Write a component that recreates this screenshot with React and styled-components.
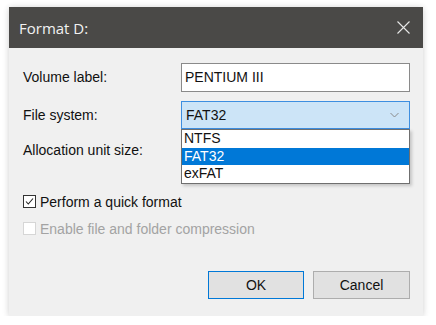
import styled, { createGlobalStyle } from 'styled-components';

const GlobalStyle = createGlobalStyle`
  body {
    margin: 0;
    background: #ffffff;
    font-family: "Liberation Sans", Arial, sans-serif;
  }
`;

const Page = styled.div`
  padding: 7px 0 0 9px;
`;

const Dialog = styled.div`
  width: 414px;
  height: 309px;
  display: flex;
  flex-direction: column;
  background: #f0f0f0;
  box-shadow: 0 0 6px rgba(0, 0, 0, 0.12), 0 2px 8px rgba(0, 0, 0, 0.08);
`;

const TitleBar = styled.div`
  height: 41px;
  display: flex;
  align-items: center;
  justify-content: space-between;
  padding: 0 13px 0 10px;
  background: #4a4947;
  color: #f2f2f2;
  font-family: "Open Sans", "Noto Sans", sans-serif;
  font-size: 15px;
`;

const Body = styled.div`
  flex: 1;
  display: flex;
  flex-direction: column;
  padding: 14px 13px 0 14px;
  font-size: 14px;
  color: #111;
`;

const FieldRow = styled.div`
  display: grid;
  grid-template-columns: 158px 229px;
  align-items: center;
  height: ${(p) => p.h}px;
  margin-bottom: ${(p) => p.mb || 0}px;
  position: relative;
`;

const Label = styled.span`
  line-height: 16px;
`;

const TextBox = styled.div`
  height: 29px;
  box-sizing: border-box;
  border: 1px solid #8a8a8a;
  background: #fff;
  display: flex;
  align-items: center;
  padding-left: 3px;
`;

const Select = styled.div`
  height: 28px;
  box-sizing: border-box;
  border: 1px solid #3d8ee0;
  background: #cce4f7;
  display: flex;
  align-items: center;
  justify-content: space-between;
  padding: 0 10px 0 4px;
`;

const List = styled.div`
  position: absolute;
  left: 158px;
  top: 28px;
  width: 229px;
  box-sizing: border-box;
  border: 1px solid #6f6f6f;
  background: #fff;
  box-shadow: 2px 2px 3px rgba(0, 0, 0, 0.18);
  z-index: 2;
`;

const Option = styled.div`
  height: 17.5px;
  line-height: 17px;
  padding-left: 2px;
  background: ${(p) => (p.selected ? '#0078d7' : 'transparent')};
  color: ${(p) => (p.selected ? '#fff' : '#111')};
`;

const CheckRow = styled.label`
  display: flex;
  align-items: center;
  gap: 4px;
  height: 27px;
  color: ${(p) => (p.disabled ? '#a3a3a3' : '#111')};
`;

const Box = styled.span`
  width: 13px;
  height: 13px;
  box-sizing: border-box;
  border: 1px solid ${(p) => (p.disabled ? '#d6d6d6' : '#333')};
  background: #fff;
  display: flex;
  align-items: center;
  justify-content: center;
`;

const Buttons = styled.div`
  display: flex;
  justify-content: flex-end;
  gap: 9px;
  margin-top: auto;
  margin-bottom: 17px;
`;

const Button = styled.button`
  width: ${(p) => p.w}px;
  height: 28px;
  box-sizing: border-box;
  border: 1px solid ${(p) => (p.primary ? '#0078d7' : '#adadad')};
  background: #e1e1e1;
  font-family: "Liberation Sans", Arial, sans-serif;
  font-size: 14px;
  color: #111;
  padding: 0;
`;

const Close = () => (
  <svg width="13" height="13" viewBox="0 0 13 13">
    <path d="M0.5 0.5 L12.5 12.5 M12.5 0.5 L0.5 12.5" stroke="#e8e8e8" strokeWidth="1.1" fill="none" />
  </svg>
);

const Chevron = () => (
  <svg width="9" height="6" viewBox="0 0 9 6">
    <path d="M0.5 1 L4.5 5 L8.5 1" stroke="#8a8a8a" strokeWidth="1" fill="none" />
  </svg>
);

const Check = () => (
  <svg width="11" height="11" viewBox="0 0 11 11">
    <path d="M2 5.5 L4.3 8 L9 2.5" stroke="#222" strokeWidth="1.1" fill="none" />
  </svg>
);

const App = () => (
  <Page>
    <GlobalStyle />
    <Dialog>
      <TitleBar>
        <span>Format D:</span>
        <Close />
      </TitleBar>
      <Body>
        <FieldRow h={30} mb={9}>
          <Label>Volume label:</Label>
          <TextBox>PENTIUM III</TextBox>
        </FieldRow>
        <FieldRow h={28} mb={7}>
          <Label>File system:</Label>
          <Select>
            <span>FAT32</span>
            <Chevron />
          </Select>
          <List>
            <Option>NTFS</Option>
            <Option selected>FAT32</Option>
            <Option>exFAT</Option>
          </List>
        </FieldRow>
        <FieldRow h={28} mb={24}>
          <Label>Allocation unit size:</Label>
          <span />
        </FieldRow>
        <CheckRow>
          <Box><Check /></Box>
          Perform a quick format
        </CheckRow>
        <CheckRow disabled>
          <Box disabled />
          Enable file and folder compression
        </CheckRow>
        <Buttons>
          <Button primary w={96}>OK</Button>
          <Button w={97}>Cancel</Button>
        </Buttons>
      </Body>
    </Dialog>
  </Page>
);

export default App;
